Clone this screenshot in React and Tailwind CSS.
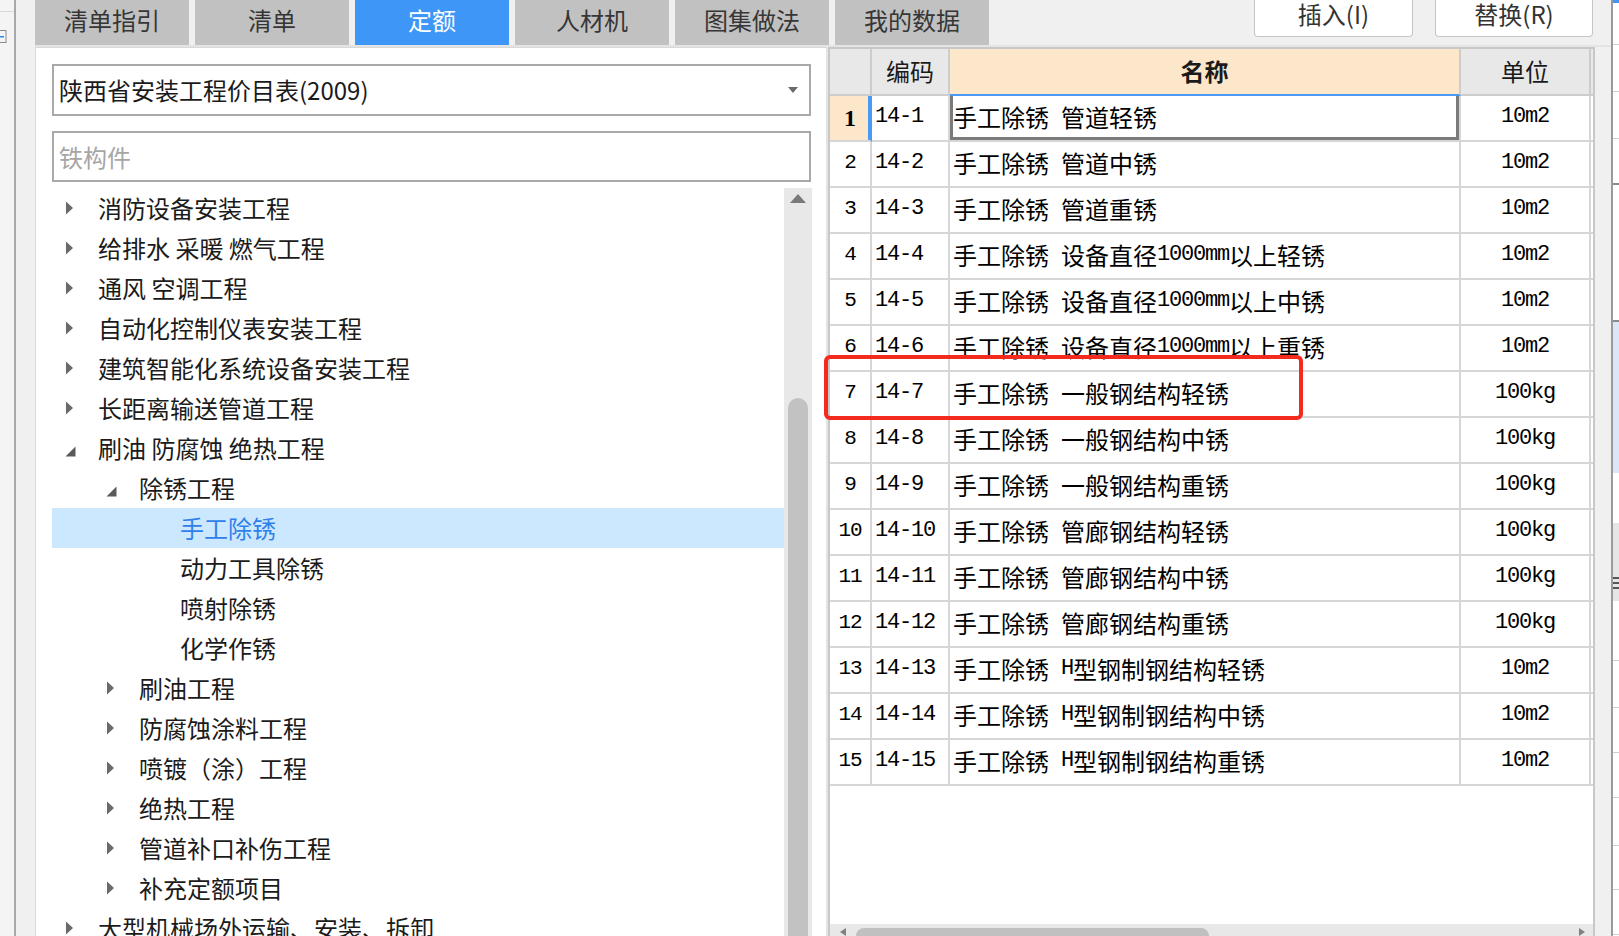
import React from 'react';

const tabs = ['清单指引', '清单', '定额', '人材机', '图集做法', '我的数据'];

const tree = [
  { t: '消防设备安装工程', l: 0, s: 'c' },
  { t: '给排水 采暖 燃气工程', l: 0, s: 'c' },
  { t: '通风 空调工程', l: 0, s: 'c' },
  { t: '自动化控制仪表安装工程', l: 0, s: 'c' },
  { t: '建筑智能化系统设备安装工程', l: 0, s: 'c' },
  { t: '长距离输送管道工程', l: 0, s: 'c' },
  { t: '刷油 防腐蚀 绝热工程', l: 0, s: 'e' },
  { t: '除锈工程', l: 1, s: 'e' },
  { t: '手工除锈', l: 2, sel: true },
  { t: '动力工具除锈', l: 2 },
  { t: '喷射除锈', l: 2 },
  { t: '化学作锈', l: 2 },
  { t: '刷油工程', l: 1, s: 'c' },
  { t: '防腐蚀涂料工程', l: 1, s: 'c' },
  { t: '喷镀（涂）工程', l: 1, s: 'c' },
  { t: '绝热工程', l: 1, s: 'c' },
  { t: '管道补口补伤工程', l: 1, s: 'c' },
  { t: '补充定额项目', l: 1, s: 'c' },
  { t: '大型机械场外运输、安装、拆卸', l: 0, s: 'c' },
];

const rows = [
  ['14-1', '手工除锈 管道轻锈', '10m2'],
  ['14-2', '手工除锈 管道中锈', '10m2'],
  ['14-3', '手工除锈 管道重锈', '10m2'],
  ['14-4', '手工除锈 设备直径1000mm以上轻锈', '10m2'],
  ['14-5', '手工除锈 设备直径1000mm以上中锈', '10m2'],
  ['14-6', '手工除锈 设备直径1000mm以上重锈', '10m2'],
  ['14-7', '手工除锈 一般钢结构轻锈', '100kg'],
  ['14-8', '手工除锈 一般钢结构中锈', '100kg'],
  ['14-9', '手工除锈 一般钢结构重锈', '100kg'],
  ['14-10', '手工除锈 管廊钢结构轻锈', '100kg'],
  ['14-11', '手工除锈 管廊钢结构中锈', '100kg'],
  ['14-12', '手工除锈 管廊钢结构重锈', '100kg'],
  ['14-13', '手工除锈 H型钢制钢结构轻锈', '10m2'],
  ['14-14', '手工除锈 H型钢制钢结构中锈', '10m2'],
  ['14-15', '手工除锈 H型钢制钢结构重锈', '10m2'],
];

const levelPad = ['pl-[13px]', 'pl-[54px]', 'pl-[95px]'];

function Mixed({ text }) {
  const parts = text.split(/([\x00-\xff]+)/).filter(Boolean);
  return parts.map((p, i) =>
    /^[\x00-\xff]+$/.test(p) ? (
      <span key={i} className="font-['Liberation_Mono',monospace] text-[22px] tracking-[-1.2px] whitespace-pre">
        {p}
      </span>
    ) : (
      <span key={i}>{p}</span>
    )
  );
}

function TriRight() {
  return (
    <svg width="9" height="14" viewBox="0 0 9 14">
      <path d="M1 0.5 L8 7 L1 13.5 Z" fill="#6a6a6a" />
    </svg>
  );
}

function TriExpanded() {
  return (
    <svg width="11" height="11" viewBox="0 0 11 11" className="mt-[6px]">
      <path d="M10.5 0.5 L10.5 10.5 L0.5 10.5 Z" fill="#5a5a5a" />
    </svg>
  );
}

function RightStrip() {
  return (
    <div className="w-[6px] h-full flex flex-col bg-white">
      <div className="h-[3px] bg-[#3e97f6]" />
      <div className="h-[42px] border-b border-[#d0d0d0]" />
      <div className="h-[47px] border-b border-[#d0d0d0]" />
      <div className="h-[47px] border-b border-[#d0d0d0]" />
      <div className="h-[46px] border-b-2 border-[#8a8a8a]" />
      <div className="h-[137px] border-b-2 border-[#8a8a8a]" />
      <div className="h-[151px] bg-[#dbe7f9]" />
      <div className="h-[50px]" />
      <div className="h-[42px] bg-[#e6e6e6]" />
      <div className="h-[36px] bg-[#e6e6e6] flex flex-col justify-center gap-[3px]">
        <div className="h-[2px] bg-[#555]" />
        <div className="h-[2px] bg-[#555]" />
        <div className="h-[2px] bg-[#555]" />
      </div>
      <div className="h-[60px] border-b border-[#d0d0d0]" />
      <div className="h-[47px] border-b border-[#d0d0d0]" />
      <div className="h-[45px] border-b border-[#d0d0d0]" />
      <div className="h-[45px] border-b border-[#d0d0d0]" />
      <div className="h-[48px] border-b border-[#d0d0d0]" />
      <div className="h-[44px] border-b border-[#d0d0d0]" />
      <div className="h-[45px] border-b border-[#d0d0d0]" />
    </div>
  );
}

export default function App() {
  return (
    <div className="w-[1619px] h-[936px] overflow-hidden flex bg-[#f0f0f0] font-['Noto_Sans_CJK_SC','Noto_Sans',sans-serif] relative">
      {/* far-left strip */}
      <div className="w-[14px] h-full bg-[#f4f4f4] flex flex-col">
        <div className="h-[12px] border-b border-[#d8d8d8]" />
        <div className="mt-[18px]">
          <svg width="7" height="14" viewBox="0 0 7 14">
            <rect x="-1" y="0.5" width="7" height="12" fill="none" stroke="#8a8a8a" />
            <rect x="0" y="6" width="4" height="1.5" fill="#2d8ae8" />
          </svg>
        </div>
      </div>
      <div className="w-[2px] h-full bg-[#a8a8a8]" />
      <div className="w-[19px] h-full bg-[#f0f0f0]" />

      {/* main area */}
      <div className="w-[1576px] h-full flex flex-col">
        {/* tab row */}
        <div className="h-[45px] flex items-stretch">
          <div className="flex gap-[6px]">
            {tabs.map((t, i) => (
              <div
                key={t}
                className={
                  i === 2
                    ? 'w-[154px] flex items-center justify-center pb-[5px] text-[24px] bg-[#3e97f6] text-white'
                    : 'w-[154px] flex items-center justify-center pb-[5px] text-[24px] bg-[#c1c1c1] text-[#363636]'
                }
              >
                {t}
              </div>
            ))}
          </div>
          <div className="flex-1" />
          <div className="flex gap-[22px] mr-[18px] h-[37px]">
            <div className="w-[159px] h-full bg-white border border-t-0 border-[#c6c6c6] rounded-b-[4px] flex items-center justify-center pb-[8px] text-[24px] leading-[28px] text-[#333]">
              插入(I)
            </div>
            <div className="w-[158px] h-full bg-white border border-t-0 border-[#c6c6c6] rounded-b-[4px] flex items-center justify-center pb-[8px] text-[24px] leading-[28px] text-[#333]">
              替换(R)
            </div>
          </div>
        </div>
        <div className="h-[2px] bg-[#e4e4e4]" />

        {/* body */}
        <div className="flex-1 flex min-h-0">
          {/* left panel */}
          <div className="w-[791px] h-full bg-white border-l border-t border-[#d8d8d8] pl-[16px] flex flex-col">
            <div className="mt-[16px] w-[759px] h-[52px] border-2 border-[#a9a9a9] flex items-center pl-[5px] pr-[11px] text-[24px] text-[#1a1a1a]">
              <span className="flex-1">陕西省安装工程价目表(2009)</span>
              <svg width="10" height="6" viewBox="0 0 10 6">
                <path d="M0 0 L10 0 L5 6 Z" fill="#6a6a6a" />
              </svg>
            </div>
            <div className="mt-[15px] w-[759px] h-[51px] border-2 border-[#a9a9a9] flex items-center pl-[5px] text-[24px] text-[#a6a6a6]">
              铁构件
            </div>
            <div className="mt-[6px] flex-1 flex min-h-0">
              <div className="w-[732px] flex flex-col overflow-hidden">
                {tree.map((n, i) => (
                  <div
                    key={i}
                    className={
                      'h-[40px] shrink-0 flex items-center text-[24px] whitespace-nowrap ' +
                      levelPad[n.l] +
                      (n.sel ? ' bg-[#cce8ff] text-[#2f80ea]' : ' text-[#1b1b1b]')
                    }
                  >
                    <div className="w-[33px] flex items-center">
                      {n.s === 'c' && <TriRight />}
                      {n.s === 'e' && <TriExpanded />}
                    </div>
                    <span>{n.t}</span>
                  </div>
                ))}
              </div>
              {/* vertical scrollbar */}
              <div className="w-[28px] h-full bg-[#e8e8e8] flex flex-col items-center">
                <svg width="16" height="9" viewBox="0 0 16 9" className="mt-[6px]">
                  <path d="M8 0 L16 9 L0 9 Z" fill="#7a7a7a" />
                </svg>
                <div className="mt-[195px] w-[20px] flex-1 bg-[#c2c2c2] rounded-t-full" />
              </div>
            </div>
          </div>
          <div className="w-[2px] h-full bg-[#e4e4e4]" />

          {/* table panel */}
          <div className="w-[767px] h-full border-t-2 border-x-2 border-[#c8c8c8] bg-white flex flex-col">
            <div className="grid grid-cols-[42px_78px_511px_130px_1fr]">
              {/* header */}
              <div className="h-[47px] bg-[#e8e8e8] border-r-2 border-b-2 border-[#cdcdcd]" />
              <div className="h-[47px] bg-[#e8e8e8] border-r-2 border-b-2 border-[#cdcdcd] flex items-center justify-center pb-[2px] text-[24px] text-[#1a1a1a]">
                编码
              </div>
              <div className="h-[47px] bg-[#fde7cb] border-r-2 border-[#cdcdcd] border-b-2 border-b-[#4a9af5] flex items-center justify-center pb-[2px] text-[24px] font-bold text-[#1a1a1a]">
                名称
              </div>
              <div className="h-[47px] bg-[#e8e8e8] border-r-2 border-b-2 border-[#cdcdcd] flex items-center justify-center pb-[2px] text-[24px] text-[#1a1a1a]">
                单位
              </div>
              <div className="h-[47px] bg-[#e8e8e8] border-b-2 border-[#cdcdcd]" />

              {rows.map((r, i) => (
                <React.Fragment key={r[0]}>
                  <div
                    className={
                      i === 0
                        ? 'h-[46px] bg-[#fde7cb] border-r-2 border-b-2 border-[#d6d6d6] border-r-[#4a9af5] shadow-[inset_-2px_0_0_#4a9af5] flex items-center justify-center font-["Liberation_Serif",serif] font-bold text-[24px] text-black'
                        : 'h-[46px] border-r-2 border-b-2 border-[#d6d6d6] flex items-center justify-center pb-[2px] font-["Liberation_Mono",monospace] text-[21px] tracking-[-1px] text-black'
                    }
                  >
                    {i + 1}
                  </div>
                  <div className="h-[46px] border-r-2 border-b-2 border-[#d6d6d6] flex items-center pl-[3px] pb-[3px] text-[24px] text-black">
                    <Mixed text={r[0]} />
                  </div>
                  <div
                    className={
                      i === 0
                        ? 'h-[46px] border-r-2 border-b-2 border-[#d6d6d6] flex items-center pl-[3px] pb-[3px] text-[24px] text-black whitespace-nowrap shadow-[inset_3px_0_0_#7b7b7b,inset_-3px_0_0_#7b7b7b,inset_0_-3px_0_#7b7b7b]'
                        : 'h-[46px] border-r-2 border-b-2 border-[#d6d6d6] flex items-center pl-[3px] pb-[3px] text-[24px] text-black whitespace-nowrap'
                    }
                  >
                    <Mixed text={r[1]} />
                  </div>
                  <div className="h-[46px] border-r-2 border-b-2 border-[#d6d6d6] flex items-center justify-center pb-[3px] text-[24px] text-black">
                    <Mixed text={r[2]} />
                  </div>
                  <div className="h-[46px] border-b-2 border-[#d6d6d6]" />
                </React.Fragment>
              ))}
            </div>
            <div className="flex-1" />
            {/* horizontal scrollbar */}
            <div className="h-[12px] bg-[#e8e8e8] flex items-end">
              <svg width="6" height="8" viewBox="0 0 6 8" className="ml-[10px]">
                <path d="M6 0 L6 8 L0 4 Z" fill="#808080" />
              </svg>
              <div className="ml-[10px] w-[353px] h-[8px] bg-[#c0c0c0] rounded-t-full" />
              <div className="flex-1" />
              <svg width="6" height="8" viewBox="0 0 6 8" className="mr-[8px]">
                <path d="M0 0 L6 4 L0 8 Z" fill="#808080" />
              </svg>
            </div>
          </div>
          <div className="flex-1" />
        </div>
      </div>

      <div className="w-[2px] h-full bg-[#9a9a9a]" />
      <RightStrip />

      {/* red annotation rectangle */}
      <div className="absolute left-[824px] top-[355px] w-[479px] h-[65px] border-[4px] border-[#f52a1e] rounded-[6px] pointer-events-none" />
    </div>
  );
}
